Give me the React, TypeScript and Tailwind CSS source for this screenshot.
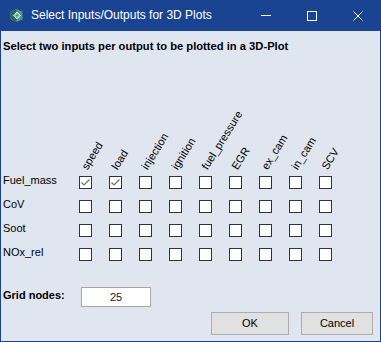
import React from 'react';

const inputs = ['speed', 'load', 'injection', 'ignition', 'fuel_pressure', 'EGR', 'ex_cam', 'in_cam', 'SCV'];
const outputs = ['Fuel_mass', 'CoV', 'Soot', 'NOx_rel'];
const checked: Record<string, string[]> = { Fuel_mass: ['speed', 'load'] };

const AppIcon = () => (
    <svg width="15" height="15" viewBox="0 0 15 15">
        <path d="M1.5 3.5 L7.5 1 L13.5 3.5 L13.5 11.5 L7.5 14 L1.5 11.5 Z" fill="#4a9b86" />
        <path d="M1.5 3.5 L7.5 1 L7.5 14 L1.5 11.5 Z" fill="#2a6a5a" />
        <path d="M8 4 L11.5 7.5 L8 11 L4.5 7.5 Z" fill="#8fcab6" stroke="#eef8f3" strokeWidth="1" />
        <path d="M8 6 L9.5 7.5 L8 9 L6.5 7.5 Z" fill="#3f8f7c" />
    </svg>
);

const CheckBox = ({ on }: { on: boolean }) => (
    <div className="w-[13px] h-[13px] border border-[#333333] bg-white flex items-center justify-center">
        {on && (
            <svg width="11" height="11" viewBox="0 0 11 11">
                <polyline points="1.5,5.5 4,8 9.5,2.5" fill="none" stroke="#707070" strokeWidth="1.2" />
            </svg>
        )}
    </div>
);

export default function App() {
    return (
        <div className="w-[381px] h-[342px] bg-[#e0e6f0] border-x border-b border-[#1a4392] flex flex-col font-['Liberation_Sans',Arial,sans-serif] text-[11px] leading-[13px] text-black">
            {/* title bar */}
            <div className="h-[31px] bg-[#1a4392] flex items-center text-white shrink-0 -mx-px">
                <div className="ml-[9px] mr-[7px] flex items-center"><AppIcon /></div>
                <span className="text-[12px]">Select Inputs/Outputs for 3D Plots</span>
                <div className="ml-auto flex items-center h-full">
                    <div className="w-[46px] h-full flex items-center justify-center">
                        <div className="w-[10px] h-px bg-white" />
                    </div>
                    <div className="w-[46px] h-full flex items-center justify-center">
                        <div className="w-[10px] h-[10px] border border-white" />
                    </div>
                    <div className="w-[46px] h-full flex items-center justify-center">
                        <svg width="10" height="10" viewBox="0 0 10 10">
                            <path d="M0.5 0.5 L9.5 9.5 M9.5 0.5 L0.5 9.5" stroke="white" strokeWidth="1" />
                        </svg>
                    </div>
                </div>
            </div>

            <div className="pl-[2px] pt-[9px] font-bold text-[11.2px]">Select two inputs per output to be plotted in a 3D-Plot</div>

            {/* rotated input headers */}
            <div className="h-[121px] flex">
                <div className="w-[78px] shrink-0" />
                {inputs.map((name) => (
                    <div key={name} className="w-[30px] shrink-0 relative">
                        <span className="absolute left-[11px] bottom-[2px] origin-bottom-left -rotate-[58deg] whitespace-nowrap">{name}</span>
                    </div>
                ))}
            </div>

            {/* output rows */}
            {outputs.map((out) => (
                <div key={out} className="h-[24px] flex items-start">
                    <div className="w-[78px] shrink-0 pl-[2px]">{out}</div>
                    {inputs.map((inp) => (
                        <div key={inp} className="w-[30px] shrink-0 pt-[2px]">
                            <CheckBox on={(checked[out] || []).includes(inp)} />
                        </div>
                    ))}
                </div>
            ))}

            <div className="mt-[17px] flex items-start">
                <div className="w-[80px] shrink-0 pl-[2px] pt-[2px] font-bold">Grid nodes:</div>
                <div className="w-[70px] h-[20px] bg-white border border-[#a6a6a6] flex items-center justify-center text-[#1a1a1a]">25</div>
            </div>

            <div className="mt-[5px] flex justify-end gap-[12px] pr-[7px]">
                <button className="w-[78px] h-[23px] bg-[#e1e1e1] border border-[#adadad]">OK</button>
                <button className="w-[72px] h-[23px] bg-[#e1e1e1] border border-[#adadad]">Cancel</button>
            </div>
        </div>
    );
}
